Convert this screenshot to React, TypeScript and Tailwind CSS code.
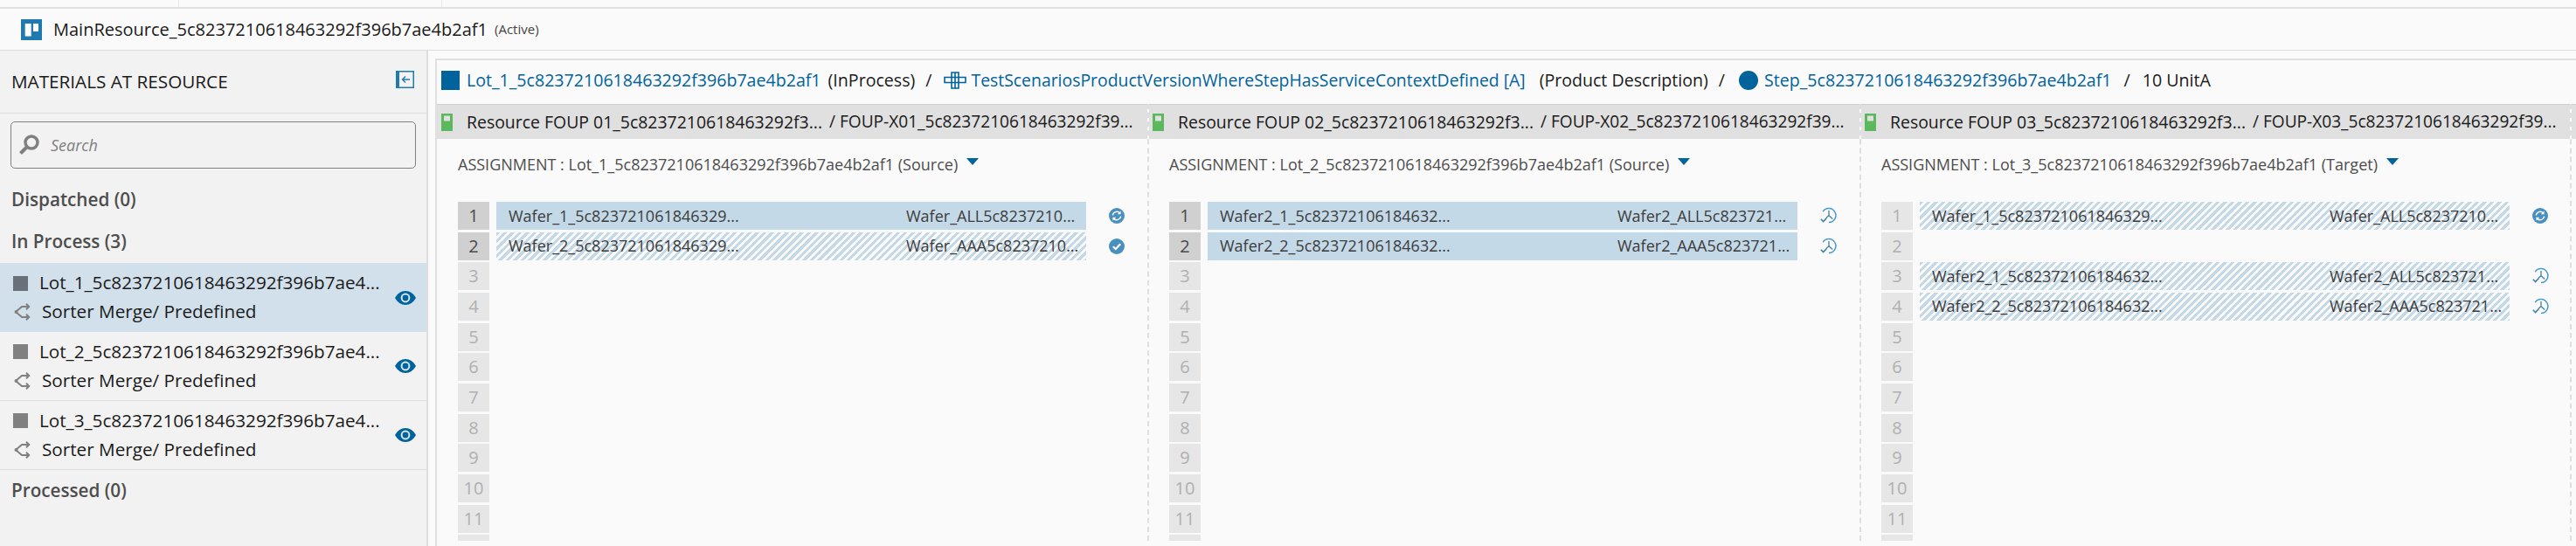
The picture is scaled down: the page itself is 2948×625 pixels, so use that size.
import React from 'react';

const font = "font-['Open_Sans',sans-serif]";

type Row = { left: string; right: string; hatched?: boolean; status: 'sync' | 'check' | 'clock' };
type Slot = Row | null;

const Truncated: React.FC<{ text: string; className?: string }> = ({ text, className }) => (
  <span className={`block truncate ${className ?? ''}`}>{text}</span>
);

const SyncIcon = () => (
  <svg width="18" height="18" viewBox="0 0 18 18">
    <circle cx="9" cy="9" r="9" fill="#4a90bf" />
    <path d="M4.300 8.400A4.800 4.800 0 0 1 12.300 5.600M13.700 9.600A4.800 4.800 0 0 1 5.700 12.400" fill="none" stroke="#fff" strokeWidth="1.500" />
    <path d="M13.600 3.400v3.800H9.800zM4.400 14.600v-3.800h3.800z" fill="#fff" />
  </svg>
);

const CheckIcon = () => (
  <svg width="18" height="18" viewBox="0 0 18 18">
    <circle cx="9" cy="9" r="9" fill="#4a90bf" />
    <path d="M4.800 9.200l3 2.800 5.400-5.800" fill="none" stroke="#fff" strokeWidth="2.200" />
  </svg>
);

const ClockIcon = () => (
  <svg width="20" height="20" viewBox="0 0 20 20" fill="none" stroke="#4a9ac9" strokeWidth="1.500">
    <path d="M4.200 5.200A8 8 0 1 1 11 17.600" />
    <path d="M11 4v5.700l4.200 3.800M11 9.700l-2.800 2.300" strokeWidth="1.300" stroke="#3f7fa8" />
    <path d="M1.800 13.800l2.800 2.800 4-4.400" stroke="#3f7fa8" />
  </svg>
);

const EyeIcon = () => (
  <svg width="24" height="16" viewBox="0 0 24 16" className="shrink-0">
    <path d="M0 8C3 2.800 7 0 12 0s9 2.800 12 8c-3 5.200-7 8-12 8S3 13.200 0 8z" fill="#00639c" />
    <circle cx="12" cy="8" r="5.400" fill="#d9e6ef" />
    <circle cx="12" cy="8" r="3.400" fill="#00639c" />
  </svg>
);

const MergeIcon = () => (
  <svg width="20" height="20" viewBox="0 0 20 20" fill="none" stroke="#808080" strokeWidth="2" className="ml-px shrink-0">
    <path d="M2 10L9 4h8M2 10l7 6h8" />
    <path d="M14 .8l3.200 3.200L14 7.200M14 12.800l3.200 3.200-3.200 3.200" />
    <circle cx="2.500" cy="10" r="2" fill="#808080" stroke="none" />
  </svg>
);

const LockIcon = () => (
  <svg width="13" height="20" viewBox="0 0 13 20" className="shrink-0">
    <path d="M0 0h13v20H0z" fill="#5cb85c" />
    <path d="M3 2.500h7v6H3z" fill="#e0e0e0" />
  </svg>
);

const ProductIcon = () => (
  <svg width="26" height="20" viewBox="0 0 26 20" fill="none" stroke="#00639c" strokeWidth="1.600" className="shrink-0">
    <path d="M9 1h8v18H9zM1 6.500h24v6H1zM13 1v18" />
  </svg>
);

const Status: React.FC<{ kind: Row['status'] }> = ({ kind }) => {
  if (kind === 'sync') return <SyncIcon />;
  if (kind === 'check') return <CheckIcon />;
  return <ClockIcon />;
};

const hatch =
  'bg-[repeating-linear-gradient(135deg,#c4d9e8_0px,#c4d9e8_3px,#fafafa_3px,#fafafa_6px)]';

const SlotRow: React.FC<{ n: number; row: Slot; used: boolean }> = ({ n, row, used }) => (
  <div className="flex h-8 items-stretch">
    <div
      className={`flex w-9 shrink-0 items-center justify-center text-[20px] ${
        used ? 'bg-[#d0d0d0] text-[#4a4a4a]' : 'bg-[#e6e6e6] text-[#b0b0b0]'
      }`}
    >
      {n}
    </div>
    {row && (
      <>
        <div
          className={`ml-2 flex w-[675px] shrink-0 items-center justify-between pl-3.5 text-[18px] text-[#3c3c3c] ${
            row.hatched ? hatch : 'bg-[#c4d9e8]'
          }`}
        >
          <Truncated text={row.left} />
          <span className="mr-1.5 w-[200px] shrink-0">
            <Truncated text={row.right} />
          </span>
        </div>
        <div className="flex w-[70px] items-center justify-center">
          <Status kind={row.status} />
        </div>
      </>
    )}
  </div>
);

const columns: { foup: string; carrier: string; lot: string; role: string; used: number[]; rows: Slot[] }[] = [
  {
    foup: 'Resource FOUP 01_5c8237210618463292f3...',
    carrier: '/ FOUP-X01_5c8237210618463292f39...',
    lot: 'Lot_1_5c8237210618463292f396b7ae4b2af1',
    role: 'Source',
    used: [1, 2],
    rows: [
      { left: 'Wafer_1_5c823721061846329...', right: 'Wafer_ALL5c8237210...', status: 'sync' },
      { left: 'Wafer_2_5c823721061846329...', right: 'Wafer_AAA5c8237210...', status: 'check', hatched: true },
    ],
  },
  {
    foup: 'Resource FOUP 02_5c8237210618463292f3...',
    carrier: '/ FOUP-X02_5c8237210618463292f39...',
    lot: 'Lot_2_5c8237210618463292f396b7ae4b2af1',
    role: 'Source',
    used: [1, 2],
    rows: [
      { left: 'Wafer2_1_5c82372106184632...', right: 'Wafer2_ALL5c823721...', status: 'clock' },
      { left: 'Wafer2_2_5c82372106184632...', right: 'Wafer2_AAA5c823721...', status: 'clock' },
    ],
  },
  {
    foup: 'Resource FOUP 03_5c8237210618463292f3...',
    carrier: '/ FOUP-X03_5c8237210618463292f39...',
    lot: 'Lot_3_5c8237210618463292f396b7ae4b2af1',
    role: 'Target',
    used: [],
    rows: [
      { left: 'Wafer_1_5c823721061846329...', right: 'Wafer_ALL5c8237210...', status: 'sync', hatched: true },
      null,
      { left: 'Wafer2_1_5c82372106184632...', right: 'Wafer2_ALL5c823721...', status: 'clock', hatched: true },
      { left: 'Wafer2_2_5c82372106184632...', right: 'Wafer2_AAA5c823721...', status: 'clock', hatched: true },
    ],
  },
];

const lots = ['Lot_1_5c8237210618463292f396b7ae4...', 'Lot_2_5c8237210618463292f396b7ae4...', 'Lot_3_5c8237210618463292f396b7ae4...'];

const LotItem: React.FC<{ name: string; active?: boolean }> = ({ name, active }) => (
  <div className={`flex h-[79px] items-center pl-[15px] pr-3 ${active ? 'bg-[#d2e0eb]' : 'border-b border-[#dcdcdc]'}`}>
    <div className="min-w-0 flex-1">
      <div className="flex h-[33px] items-center">
        <span className={`mr-[13px] h-[17px] w-[17px] shrink-0 ${active ? 'bg-[#6a7079]' : 'bg-[#808080]'}`} />
        <span className="truncate text-[20.7px] text-[#1a1a1a]">{name}</span>
      </div>
      <div className="flex h-[33px] items-center">
        <MergeIcon />
        <span className="ml-3 text-[20.7px] text-[#1a1a1a]">Sorter Merge/ Predefined</span>
      </div>
    </div>
    <EyeIcon />
  </div>
);

export default function App() {
  return (
    <div className={`flex h-[625px] w-[2948px] flex-col overflow-hidden bg-[#fafafa] ${font}`}>
      <div className="flex h-[10px] shrink-0 border-b-2 border-[#e0e0e0]">
        <div className="w-[205px] border-r border-[#e8e8e8]" />
        <div className="w-[301px] border-r border-[#e8e8e8]" />
      </div>
      <header className="flex h-[48px] shrink-0 items-center border-b border-[#dcdcdc] pl-6">
        <svg width="24" height="24" viewBox="0 0 24 24" className="shrink-0">
          <path d="M0 0h24v24H0z" fill="#1f7ab0" />
          <path d="M4.700 5h7v14.600h-7zM14 5h6v9h-6z" fill="#fff" />
        </svg>
        <span className="ml-[13px] text-[20px] text-[#1a1a1a]">MainResource_5c8237210618463292f396b7ae4b2af1</span>
        <span className="ml-2 text-[15px] text-[#444]">(Active)</span>
      </header>

      <div className="flex min-h-0 flex-1">
        <aside className="w-[490px] shrink-0 border-r-2 border-[#dedede] bg-[#f2f2f2]">
          <div className="flex h-[72px] items-center justify-between border-b border-[#dcdcdc] pl-[13px] pr-[14px]">
            <span className="text-[20.7px] text-[#1a1a1a]">MATERIALS AT RESOURCE</span>
            <svg width="21" height="20" viewBox="0 0 21 20" className="-mt-[5px]">
              <path d="M0 0h21v20H0z" fill="#1f7ab0" />
              <path d="M4 1.500h15.500v17H4z" fill="#f2f2f2" />
              <path d="M16 10H8M11 6.500L7.500 10l3.500 3.500" fill="none" stroke="#1f7ab0" strokeWidth="1.400" />
            </svg>
          </div>
          <div className="px-3 pt-[9px]">
            <div className="flex h-[54px] items-center rounded-[5px] border border-[#808080] pl-[8px]">
              <svg width="24" height="24" viewBox="0 0 24 24" fill="none" stroke="#808080" className="shrink-0">
                <circle cx="15" cy="9" r="7" strokeWidth="3.500" />
                <path d="M9.500 14.500L2.500 21.500" strokeWidth="4" />
              </svg>
              <span className="ml-[13px] text-[18px] italic text-[#808080]">Search</span>
            </div>
          </div>
          <div className="mt-3 flex h-[48px] items-center pl-[13px] text-[20.7px] font-semibold text-[#4d4d4d]">Dispatched (0)</div>
          <div className="flex h-[48px] items-center pl-[13px] text-[20.7px] font-semibold text-[#4d4d4d]">In Process (3)</div>
          {lots.map((l, i) => (
            <LotItem key={l} name={l} active={i === 0} />
          ))}
          <div className="flex h-[48px] items-center pl-[13px] text-[20.7px] font-semibold text-[#4d4d4d]">Processed (0)</div>
        </aside>

        <main className="ml-2 mt-[9px] min-w-0 flex-1 border-l-2 border-t-2 border-[#e0e0e0]">
          <div className="flex h-[50px] items-center whitespace-nowrap pb-1 pl-[5px] text-[19.6px]">
            <span className="h-[22px] w-[21px] shrink-0 bg-[#00639c]" />
            <a className="ml-2 text-[#00639c]">Lot_1_5c8237210618463292f396b7ae4b2af1</a>
            <span className="ml-2 text-[#1a1a1a]">(InProcess)</span>
            <span className="ml-3 mr-[14px] text-[#1a1a1a]">/</span>
            <ProductIcon />
            <a className="ml-[5px] text-[19.4px] text-[#00639c]">TestScenariosProductVersionWhereStepHasServiceContextDefined [A]</a>
            <span className="ml-4 text-[#1a1a1a]">(Product Description)</span>
            <span className="ml-3 mr-4 text-[#1a1a1a]">/</span>
            <span className="h-[22px] w-[22px] shrink-0 rounded-full bg-[#00639c]" />
            <a className="ml-[7px] text-[#00639c]">Step_5c8237210618463292f396b7ae4b2af1</a>
            <span className="ml-[14px] mr-[14px] text-[#1a1a1a]">/</span>
            <span className="text-[#1a1a1a]">10 UnitA</span>
          </div>

          <div className="grid grid-cols-[813px_815px_815px_1fr]">
            {columns.map((c, i) => (
              <section
                key={c.foup}
                className={`h-[500px] overflow-hidden ${i > 0 ? 'border-l-2 border-dashed border-[#dedede]' : ''} ${
                  i === 2 ? 'border-r-2' : ''
                }`}
              >
                <div
                  className={`flex h-[40px] items-center whitespace-nowrap border-t border-[#cfcfcf] bg-[#e0e0e0] text-[19.1px] text-[#1a1a1a] ${
                    i === 0 ? 'pl-[5px]' : 'pl-1'
                  }`}
                >
                  <LockIcon />
                  <span className="ml-4 text-[19.45px]">{c.foup}</span>
                  <span className="ml-2">{c.carrier}</span>
                </div>
                <div className={`flex h-[72px] items-start pt-4 text-[18px] text-[#4d4d4d] ${i === 0 ? 'pl-6' : 'pl-[23px]'}`}>
                  <span>ASSIGNMENT : {c.lot} ({c.role})</span>
                  <span className="ml-[10px] mt-[6px] h-0 w-0 border-x-[7px] border-t-[8px] border-x-transparent border-t-[#00639c]" />
                </div>
                <div className={`flex flex-col gap-[2.67px] ${i === 0 ? 'pl-6' : 'pl-[23px]'}`}>
                  {Array.from({ length: 12 }, (_, k) => k + 1).map((n) => (
                    <SlotRow key={n} n={n} row={c.rows[n - 1] ?? null} used={c.used.includes(n)} />
                  ))}
                </div>
              </section>
            ))}
            <div className="h-[40px] border-t border-[#cfcfcf] bg-[#e0e0e0]" />
          </div>
        </main>
      </div>
    </div>
  );
}
